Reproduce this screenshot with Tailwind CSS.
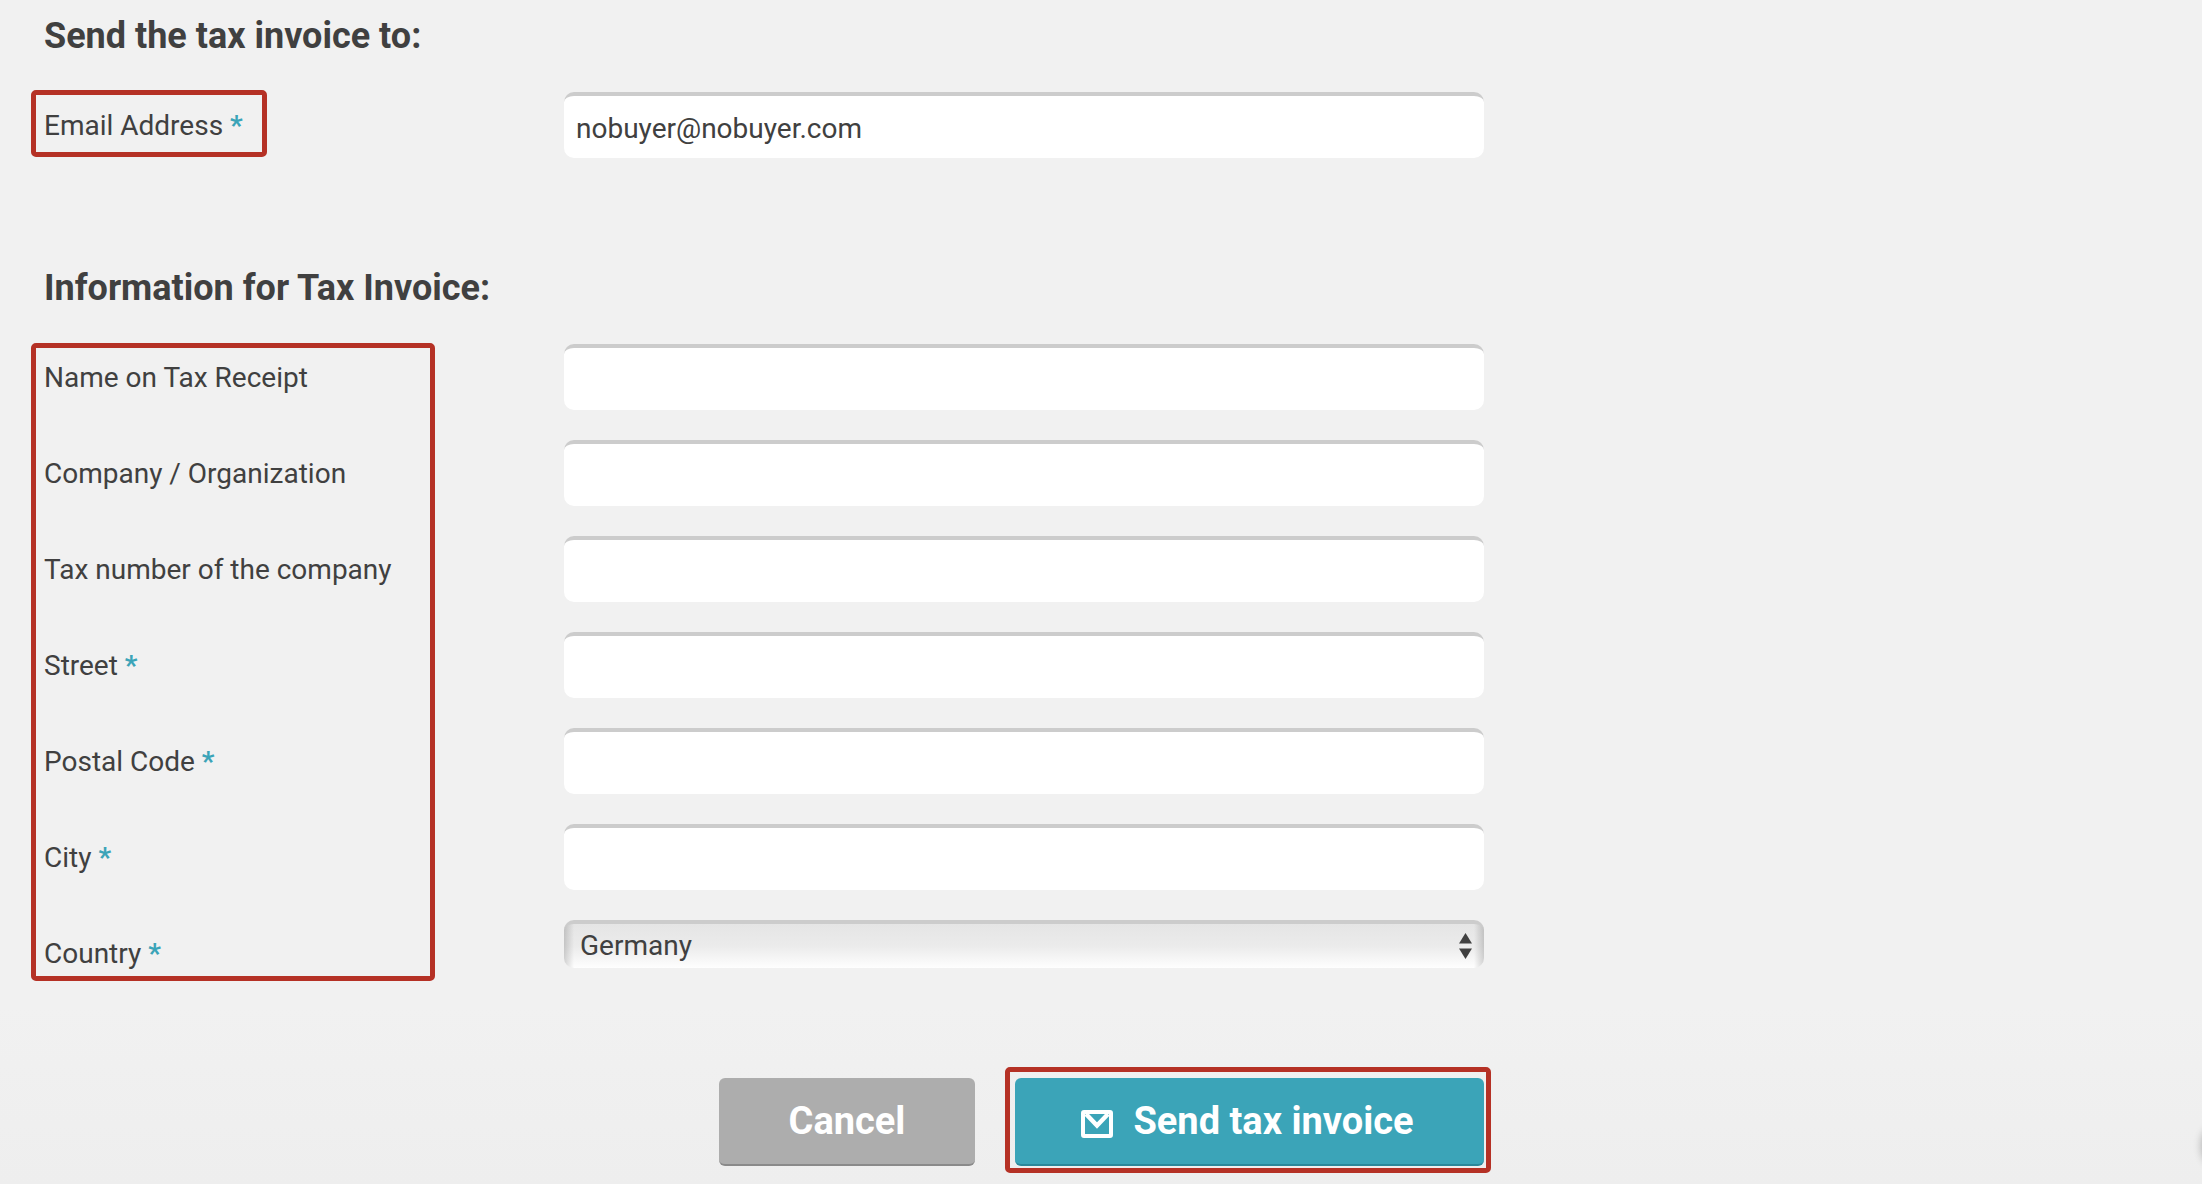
<!DOCTYPE html>
<html lang="en">
<head>
  <meta charset="UTF-8" />
  <meta name="viewport" content="width=device-width, initial-scale=1.0"/>
  <title>Tax Invoice</title>
  <script src="https://cdn.jsdelivr.net/npm/@tailwindcss/browser@4"></script>
  <style>
    body {
      font-family: Roboto, Arial, sans-serif;
    }
    .select-bg {
      background-image:
        linear-gradient(to right, rgba(0, 0, 0, 0.16), transparent 10px),
        linear-gradient(to left, rgba(0, 0, 0, 0.16), transparent 10px),
        linear-gradient(to bottom, #e5e5e5, #ebebeb 50%, #fefefe);
    }
  </style>
</head>
<body class="relative min-h-screen overflow-x-hidden bg-linear-to-b from-[#f1f1f1] from-85% to-[#eeeeee] text-[#404040]">

  <form class="max-w-[1484px] pl-11 pt-[14px] pb-[18px]" onsubmit="return false">

    <!-- Recipient -->
    <section>
      <h2 class="text-[36px] leading-[44px] font-bold">Send the tax invoice to:</h2>
      <div class="mt-[34px] grid grid-cols-[520px_minmax(0,1fr)] items-start text-[28px]">
        <div class="relative justify-self-start pr-6">
          <label for="email" class="block pt-0.5 leading-[64px]">Email Address <span class="text-[#3ba4b8] font-bold">*</span></label>
          <div class="pointer-events-none absolute -top-0.5 right-0 bottom-px -left-[13px] rounded-[5px] border-5 border-[#b53125]"></div>
        </div>
        <input id="email" type="email" value="nobuyer@nobuyer.com" class="h-[66px] w-full rounded-[10px] border-t-4 border-[#ccc] bg-white px-3 pt-0.5 outline-none" />
      </div>
    </section>

    <!-- Invoice details -->
    <section class="mt-[108px]">
      <h2 class="text-[36px] leading-[44px] font-bold">Information for Tax Invoice:</h2>
      <div class="relative mt-[34px] grid grid-cols-[520px_minmax(0,1fr)] items-start gap-y-[30px] text-[28px]">
        <label for="name" class="pt-0.5 leading-[64px]">Name on Tax Receipt</label>
        <input id="name" type="text" class="h-[66px] w-full rounded-[10px] border-t-4 border-[#ccc] bg-white px-3 pt-0.5 outline-none" />

        <label for="company" class="pt-0.5 leading-[64px]">Company / Organization</label>
        <input id="company" type="text" class="h-[66px] w-full rounded-[10px] border-t-4 border-[#ccc] bg-white px-3 pt-0.5 outline-none" />

        <label for="taxno" class="pt-0.5 leading-[64px]">Tax number of the company</label>
        <input id="taxno" type="text" class="h-[66px] w-full rounded-[10px] border-t-4 border-[#ccc] bg-white px-3 pt-0.5 outline-none" />

        <label for="street" class="pt-0.5 leading-[64px]">Street <span class="text-[#3ba4b8] font-bold">*</span></label>
        <input id="street" type="text" class="h-[66px] w-full rounded-[10px] border-t-4 border-[#ccc] bg-white px-3 pt-0.5 outline-none" />

        <label for="postal" class="pt-0.5 leading-[64px]">Postal Code <span class="text-[#3ba4b8] font-bold">*</span></label>
        <input id="postal" type="text" class="h-[66px] w-full rounded-[10px] border-t-4 border-[#ccc] bg-white px-3 pt-0.5 outline-none" />

        <label for="city" class="pt-0.5 leading-[64px]">City <span class="text-[#3ba4b8] font-bold">*</span></label>
        <input id="city" type="text" class="h-[66px] w-full rounded-[10px] border-t-4 border-[#ccc] bg-white px-3 pt-0.5 outline-none" />

        <label for="country" class="pt-0.5 leading-[64px]">Country <span class="text-[#3ba4b8] font-bold">*</span></label>
        <div class="relative">
          <select id="country" class="select-bg block h-12 w-full appearance-none rounded-[10px] border-t-4 border-[#ccc] px-4 leading-[44px] outline-none">
            <option>Germany</option>
          </select>
          <svg class="pointer-events-none absolute right-3 top-[13px] h-[26px] w-[13px]" viewBox="0 0 13 26" fill="#404040">
            <path d="M6.500 0 13 10.500H0z"/>
            <path d="M0 15.500H13L6.500 26z"/>
          </svg>
        </div>

        <div class="pointer-events-none absolute -top-px bottom-[5px] -left-[13px] w-[404px] rounded-[5px] border-5 border-[#b53125]"></div>
      </div>
    </section>

    <!-- Actions -->
    <div class="mt-[92px] flex justify-end gap-10 text-[38px] font-bold text-white">
      <button type="button" class="h-[88px] w-64 rounded-md border-b-2 border-[#8a8a8a] bg-[#adadad]">Cancel</button>
      <div class="relative">
        <button type="submit" class="flex h-[88px] w-[469px] items-center justify-center gap-5 rounded-md border-b-2 border-[#2a879a] bg-[#3ba4b8] pr-1">
          <svg class="mt-1.5 h-7 w-8" viewBox="0 0 32 28" fill="none" stroke="#fff">
            <rect x="2" y="2" width="28" height="24" rx="1" stroke-width="4"/>
            <path d="M5 4 16 15.500 27 4" stroke-width="4.500"/>
          </svg>
          Send tax invoice
        </button>
        <div class="pointer-events-none absolute -top-[11px] -right-[7px] -bottom-[7px] -left-[10px] rounded-[5px] border-5 border-[#b53125]"></div>
      </div>
    </div>
  </form>

  <!-- Shadow of the off-screen side tab -->
  <div class="pointer-events-none absolute -right-10 bottom-4 h-11 w-10 rounded-full shadow-[0_0_8px_rgba(0,0,0,0.3)]"></div>

</body>
</html>
